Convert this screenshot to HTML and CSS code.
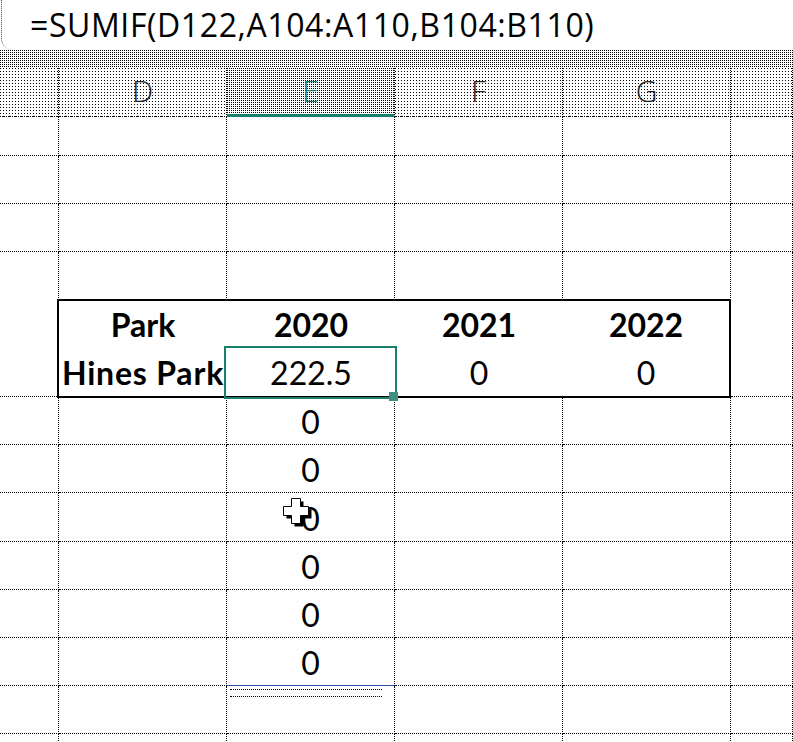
FILE: index.html
```html
<!DOCTYPE html>
<html lang="en">
<head>
   <meta charset="UTF-8">
   <meta name="viewport" content="width=device-width, initial-scale=1.0">
   <title>SUMIF</title>
   <link rel="stylesheet" href="styles.css">
</head>
<body>
   <div class="formula-bar">
      <div class="formula-box">=SUMIF(D122,A104:A110,B104:B110)</div>
   </div>
   <div class="band"></div>

   <div class="heads">
      <div class="head"></div>
      <div class="head">D</div>
      <div class="head active">E</div>
      <div class="head">F</div>
      <div class="head">G</div>
      <div class="head"></div>
   </div>

   <div class="sheet">
      <!-- row 1 -->
      <div class="c"></div><div class="c"></div><div class="c"></div><div class="c"></div><div class="c"></div><div class="c"></div>
      <!-- row 2 -->
      <div class="c"></div><div class="c"></div><div class="c"></div><div class="c"></div><div class="c"></div><div class="c"></div>
      <!-- row 3 -->
      <div class="c"></div><div class="c"></div><div class="c"></div><div class="c"></div><div class="c"></div><div class="c"></div>
      <!-- row 4 -->
      <div class="c no-b"></div><div class="c"></div><div class="c"></div><div class="c"></div><div class="c"></div><div class="c no-b"></div>

      <!-- the little table -->
      <div class="table">
         <div class="t b">Park</div>
         <div class="t b">2020</div>
         <div class="t b">2021</div>
         <div class="t b">2022</div>
         <div class="t b wide">Hines Park</div>
         <div class="t sel">222.5</div>
         <div class="t">0</div>
         <div class="t">0</div>
      </div>
      <div class="c no-b"></div><div class="c no-b"></div>
      <div class="c"></div><div class="c"></div>

      <!-- filled rows -->
      <div class="c"></div><div class="c"></div><div class="c">0</div><div class="c"></div><div class="c"></div><div class="c"></div>
      <div class="c"></div><div class="c"></div><div class="c">0</div><div class="c"></div><div class="c"></div><div class="c"></div>
      <div class="c"></div><div class="c"></div><div class="c">0</div><div class="c"></div><div class="c"></div><div class="c"></div>
      <div class="c"></div><div class="c"></div><div class="c">0</div><div class="c"></div><div class="c"></div><div class="c"></div>
      <div class="c"></div><div class="c"></div><div class="c">0</div><div class="c"></div><div class="c"></div><div class="c"></div>
      <div class="c"></div><div class="c"></div><div class="c fill-end">0</div><div class="c"></div><div class="c"></div><div class="c"></div>

      <!-- empty rows -->
      <div class="c"></div><div class="c"></div><div class="c"></div><div class="c"></div><div class="c"></div><div class="c"></div>
      <div class="c"></div><div class="c"></div><div class="c"></div><div class="c"></div><div class="c"></div><div class="c"></div>
   </div>

   <!-- mouse cursor -->
   <svg class="cursor" width="32" height="32" viewBox="0 0 32 32">
      <polygon points="11.5,3.5 20.5,3.5 20.5,11.5 28.5,11.5 28.5,20.5 20.5,20.5 20.5,28.5 11.5,28.5 11.5,20.5 3.5,20.5 3.5,11.5 11.5,11.5" fill="#000"/>
      <polygon points="8.5,0.5 17.5,0.5 17.5,8.5 25.5,8.5 25.5,17.5 17.5,17.5 17.5,25.5 8.5,25.5 8.5,17.5 0.5,17.5 0.5,8.5 8.5,8.5" fill="#fff" stroke="#000" stroke-width="1"/>
   </svg>
</body>
</html>
```

FILE: styles.css
```css
* {
   box-sizing: border-box;
}

body {
   margin: 0;
   width: 793px;
   height: 742px;
   overflow: hidden;
   background: #fff;
   color: #000;
   font-family: Lato, "Liberation Sans", sans-serif;
}

/* formula bar on top */
.formula-bar {
   height: 50px;
   display: flex;
   padding-left: 1px;
}

.formula-box {
   flex: 1;
   border-left: 1px dotted #444;
   border-bottom-left-radius: 12px;
   padding-left: 28px;
   font: 32px/50px "Open Sans", sans-serif;
   letter-spacing: 0.6px;
   white-space: nowrap;
}

.band {
   height: 18px;
   background: conic-gradient(from 270deg at 1px 1px, #000 25%, #fff 0) 0 0 / 2px 2px;
}

/* column letters */
.heads {
   display: grid;
   grid-template-columns: 59px 168px 168px 168px 168px 62px;
   height: 49px;
}

.head {
   border-right: 1px dotted #000;
   border-bottom: 1px dotted #000;
   background: conic-gradient(from 270deg at 1px 1px, #000 25%, #fff 0) 0 0 / 3px 3px;
   display: flex;
   align-items: flex-end;
   justify-content: center;
   padding-bottom: 10px;
   font: 300 30px/1 "Open Sans", sans-serif;
   color: #222;
}

.head.active {
   background: conic-gradient(from 270deg at 1px 1px, #000 25%, #fff 0) 0 0 / 2px 2px;
   border-bottom: 3px solid #1b7f6e;
   padding-bottom: 8px;
   color: #1b7f6e;
}

/* grid of cells */
.sheet {
   display: grid;
   grid-template-columns: 59px 168px 168px 168px 168px 62px;
   grid-template-rows: 39px 48px 48px 48px 48px 49px 48px 48px 49px 48px 48px 48px 48px 9px;
}

.c {
   border-right: 1px dotted #000;
   border-bottom: 1px dotted #000;
   display: flex;
   align-items: flex-end;
   justify-content: center;
   padding-bottom: 6px;
   font-size: 32px;
   line-height: 1;
}

.c.no-b {
   border-bottom: none;
}

.c.fill-end {
   position: relative;
   border-bottom: 1px solid #2b4fa8;
}

.c.fill-end::after {
   content: "";
   position: absolute;
   left: 3px;
   right: 12px;
   top: calc(100% + 4px);
   height: 6px;
   border-top: 1px dotted #000;
   border-bottom: 1px dotted #000;
}

.table {
   grid-column: 2 / 6;
   grid-row: 5 / 7;
   margin: -1px 0 -1px -2px;
   border: 2px solid #000;
   background: #fff;
   display: grid;
   grid-template-columns: 168px 168px 168px 1fr;
   grid-template-rows: 47px 48px;
}

.t {
   display: flex;
   align-items: flex-end;
   justify-content: center;
   padding-bottom: 7px;
   font-size: 32px;
   line-height: 1;
   white-space: nowrap;
}

.t.b {
   font-weight: 700;
}

.t.wide {
   letter-spacing: 0.8px;
}

/* selected cell E */
.t.sel {
   position: relative;
}

.t.sel::after {
   content: "";
   position: absolute;
   top: -2px;
   left: -3px;
   right: -2px;
   bottom: -3px;
   border: 2px solid #1b7f6e;
}

.t.sel::before {
   content: "";
   position: absolute;
   right: -3px;
   bottom: -5px;
   width: 9px;
   height: 9px;
   background: #3f8f7f;
   z-index: 1;
}

.cursor {
   position: absolute;
   left: 283px;
   top: 498px;
}
```
